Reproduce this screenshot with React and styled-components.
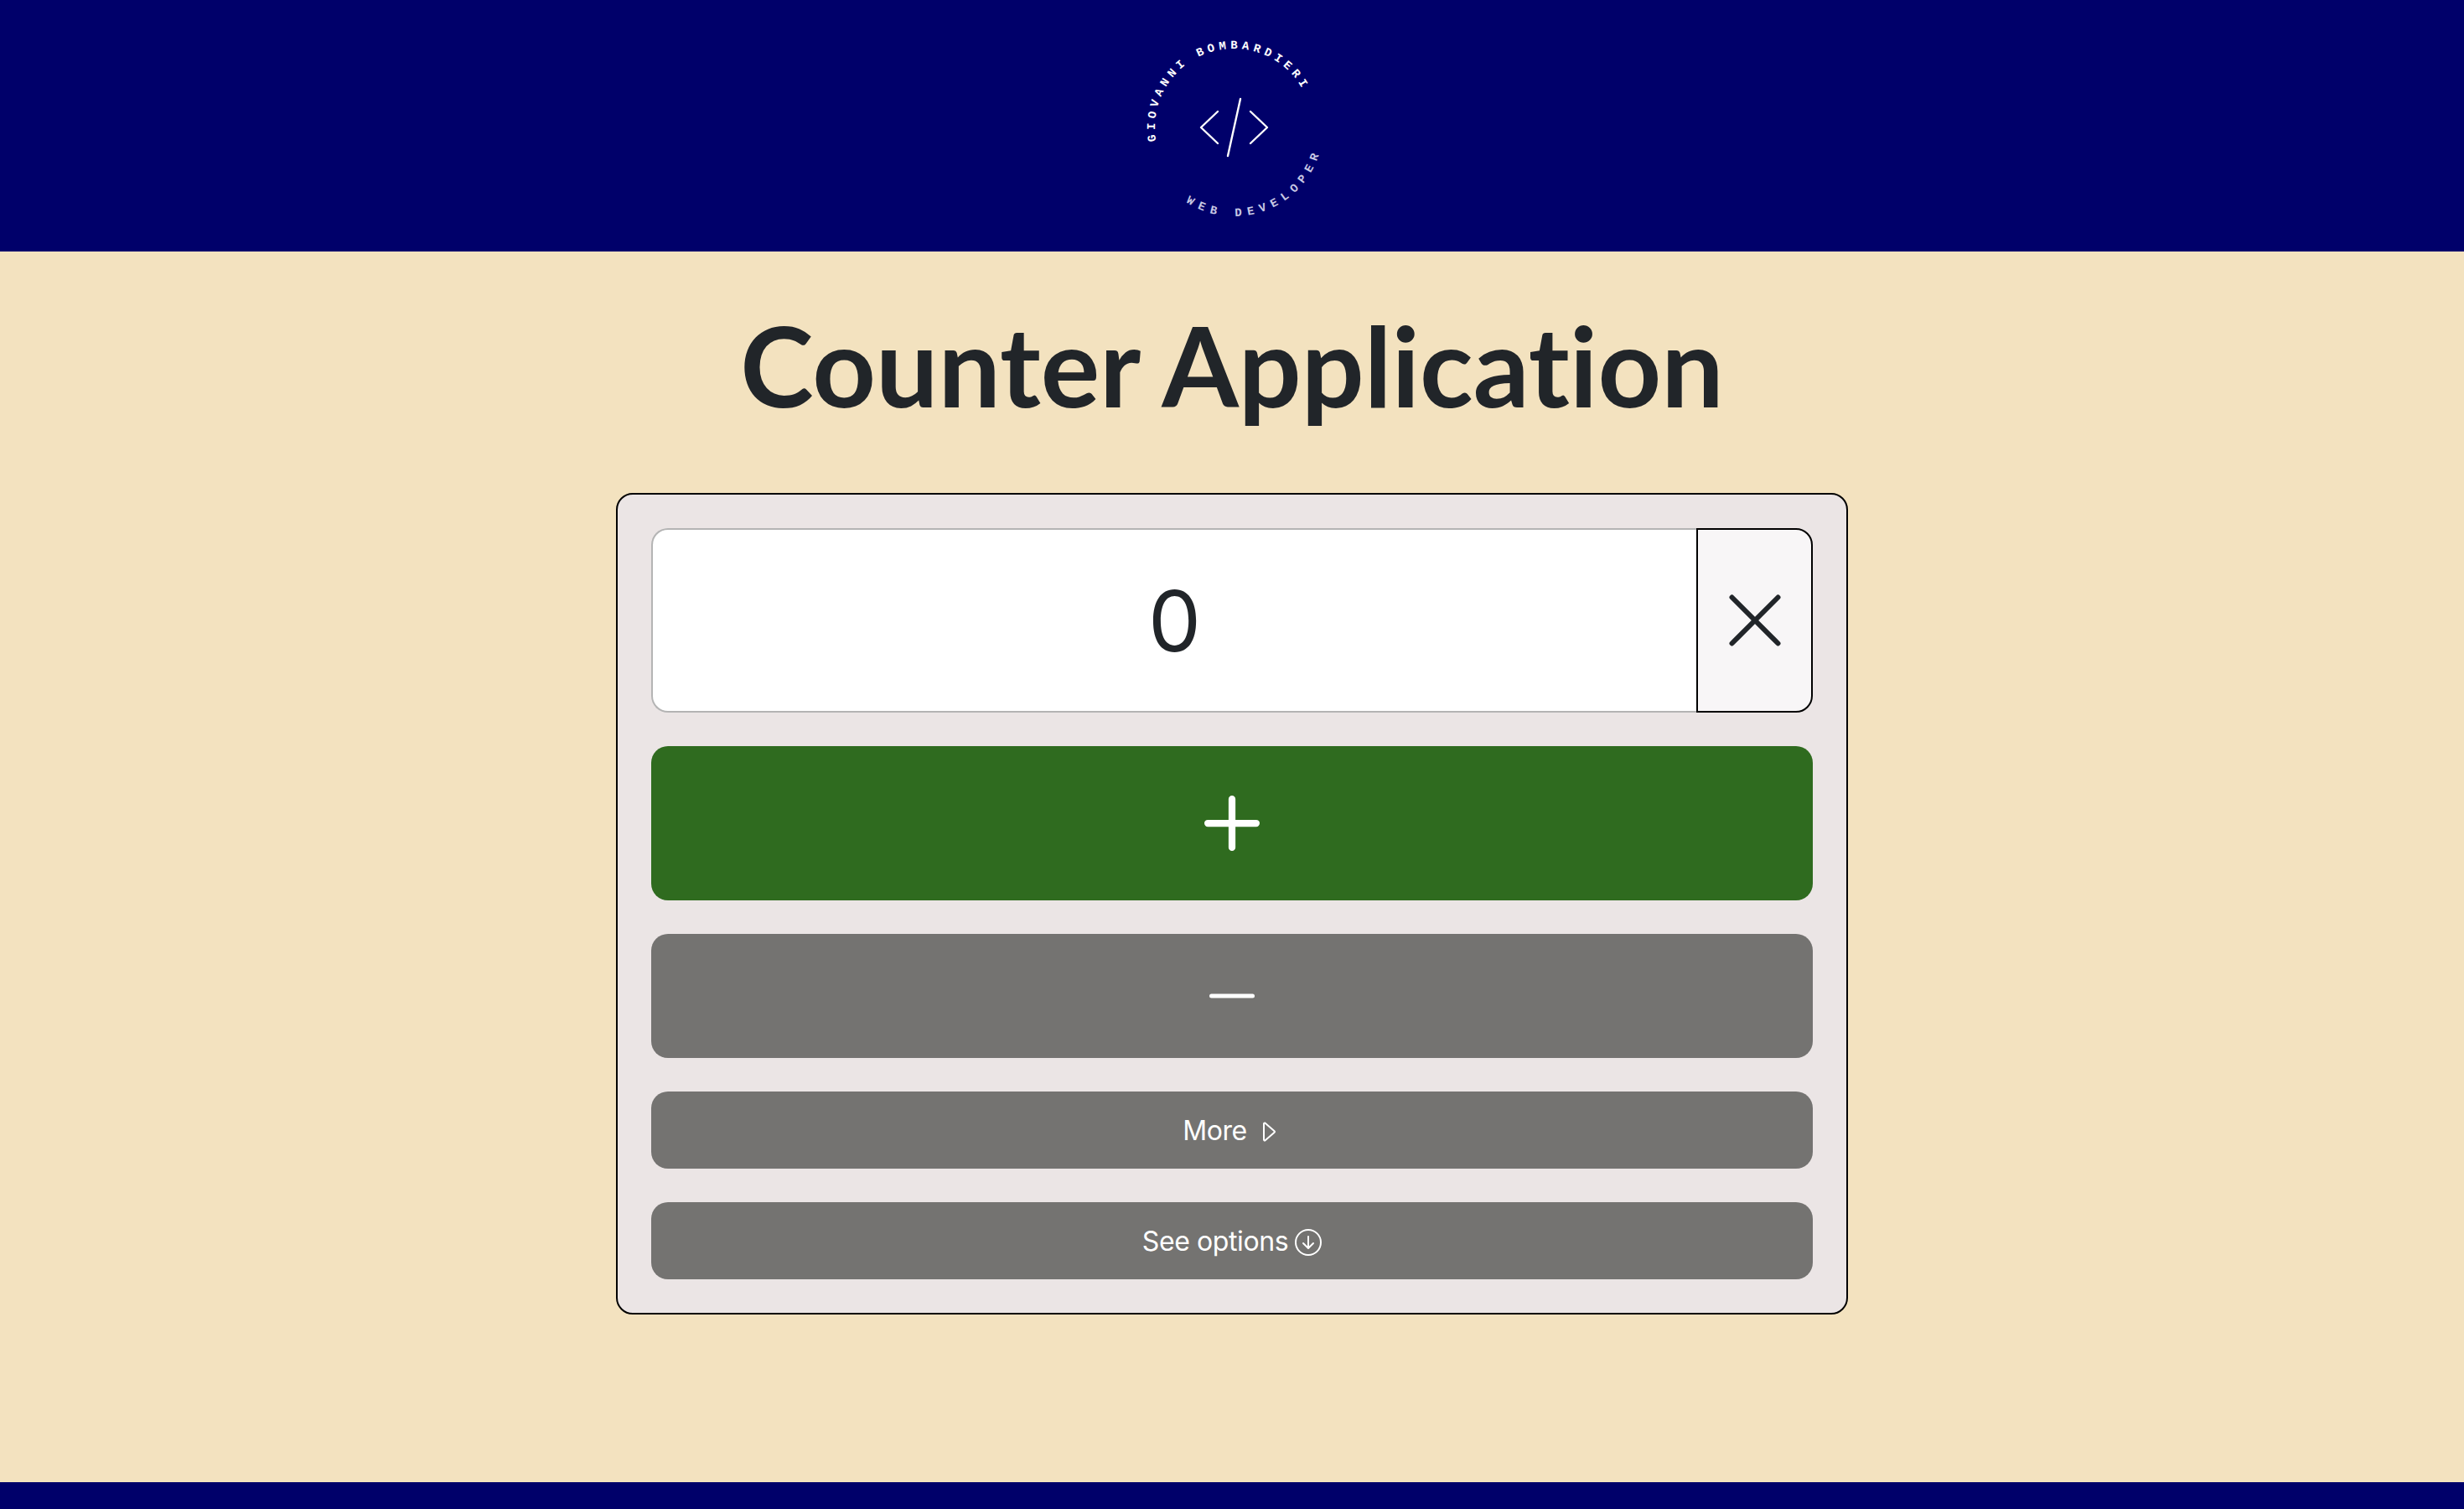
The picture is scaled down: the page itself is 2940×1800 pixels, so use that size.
import React from 'react';
import styled, { createGlobalStyle } from 'styled-components';
import { BsArrowDownCircle, BsCaretRight, BsPlus } from 'react-icons/bs';

const GlobalStyle = createGlobalStyle`
  html, body {
    margin: 0;
    padding: 0;
  }

  body {
    font-family: Inter, "Liberation Sans", sans-serif;
    color: #212529;
    background: #f3e2bf;
  }
`;

const Logo = () => (
  <LogoSvg viewBox="0 0 240 240" aria-label="Giovanni Bombardieri, web developer">
    <defs>
      <path id="arc-top" d="M 29.4 130.3 A 94 94 0 0 1 203.4 67" />
      <path id="arc-bottom" d="M 65 203 A 106 106 0 0 0 224 145" />
    </defs>
    <ArcText>
      <textPath href="#arc-top" textLength="262" lengthAdjust="spacing">GIOVANNI BOMBARDIERI</textPath>
    </ArcText>
    <ArcText $dim>
      <textPath href="#arc-bottom" textLength="194" lengthAdjust="spacing">WEB DEVELOPER</textPath>
    </ArcText>
    <CodeMark d="M 103 95 L 83 114 L 103 133 M 142 95 L 162 114 L 142 133 M 130 80 L 115 148" />
  </LogoSvg>
);

const App = () => (
  <Page>
    <GlobalStyle />
    <Header>
      <Logo />
    </Header>
    <Main>
      <Title>Counter Application</Title>
      <Card>
        <InputGroup>
          <CountDisplay>0</CountDisplay>
          <ClearButton type="button" aria-label="Reset">
            <svg width="62" height="62" viewBox="0 0 62 62">
              <IconLine d="M 3.5 3.5 L 58.5 58.5 M 58.5 3.5 L 3.5 58.5" />
            </svg>
          </ClearButton>
        </InputGroup>
        <ActionButton type="button" $height={184} $bg="#2f6b1f" aria-label="Increment">
          <BsPlus size={132} />
        </ActionButton>
        <ActionButton type="button" $height={148} aria-label="Decrement">
          <svg width="54" height="6" viewBox="0 0 54 6">
            <IconLine $width={5} d="M 2.5 3 L 51.5 3" />
          </svg>
        </ActionButton>
        <ActionButton type="button" $height={92}>
          More
          <CaretIcon />
        </ActionButton>
        <ActionButton type="button" $height={92}>
          See options
          <CircleIcon />
        </ActionButton>
      </Card>
    </Main>
    <Footer />
  </Page>
);

const Page = styled.div`
  display: flex;
  flex-direction: column;
  min-height: 1800px;
`;

const Header = styled.header`
  display: flex;
  justify-content: center;
  align-items: flex-start;
  height: 300px;
  background: #00006a;
`;

const LogoSvg = styled.svg`
  width: 240px;
  height: 240px;
  margin-top: 38px;
`;

const ArcText = styled.text`
  font-family: "Liberation Mono", monospace;
  font-size: 14px;
  font-weight: 700;
  fill: ${(p) => (p.$dim ? '#c8c8e4' : '#ffffff')};
`;

const CodeMark = styled.path`
  fill: none;
  stroke: #ffffff;
  stroke-width: 2.4;
  stroke-linecap: round;
  stroke-linejoin: round;
`;

const IconLine = styled.path`
  fill: none;
  stroke: currentColor;
  stroke-width: ${(p) => p.$width || 6};
  stroke-linecap: round;
`;

const Main = styled.main`
  flex: 1;
  display: flex;
  flex-direction: column;
  align-items: center;
`;

const Title = styled.h1`
  margin: 55px 0 0;
  height: 233px;
  font-family: Lato, "Liberation Sans", sans-serif;
  font-size: 132px;
  font-weight: 700;
  line-height: 160px;
  font-variant-ligatures: none;
  color: #212529;
`;

const Card = styled.section`
  box-sizing: border-box;
  display: flex;
  flex-direction: column;
  gap: 40px;
  width: 1470px;
  padding: 40px;
  background: #ebe5e5;
  border: 2px solid #000;
  border-radius: 20px;
`;

const InputGroup = styled.div`
  display: flex;
  height: 220px;
`;

const CountDisplay = styled.div`
  box-sizing: border-box;
  flex: 1;
  display: flex;
  align-items: center;
  justify-content: center;
  background: #fff;
  border: 2px solid #b4b4b4;
  border-right: 0;
  border-radius: 20px 0 0 20px;
  font-size: 100px;
  color: #212529;
`;

const ClearButton = styled.button`
  box-sizing: border-box;
  display: flex;
  align-items: center;
  justify-content: center;
  width: 139px;
  padding: 0;
  background: #f8f6f7;
  border: 2px solid #000;
  border-radius: 0 20px 20px 0;
  color: #212529;
`;

const ActionButton = styled.button`
  display: flex;
  align-items: center;
  justify-content: center;
  width: 100%;
  height: ${(p) => p.$height}px;
  padding: 0;
  border: 0;
  border-radius: 20px;
  background: ${(p) => p.$bg || '#747371'};
  color: #fff;
  font-family: Inter, "Liberation Sans", sans-serif;
  font-size: 32px;
  letter-spacing: -0.4px;
`;

const CaretIcon = styled(BsCaretRight)`
  width: 32px;
  height: 32px;
  margin: 4px 0 0 9px;
`;

const CircleIcon = styled(BsArrowDownCircle)`
  width: 32px;
  height: 32px;
  margin: 4px 0 0 8px;
`;

const Footer = styled.footer`
  height: 32px;
  background: #00006a;
`;

export default App;
